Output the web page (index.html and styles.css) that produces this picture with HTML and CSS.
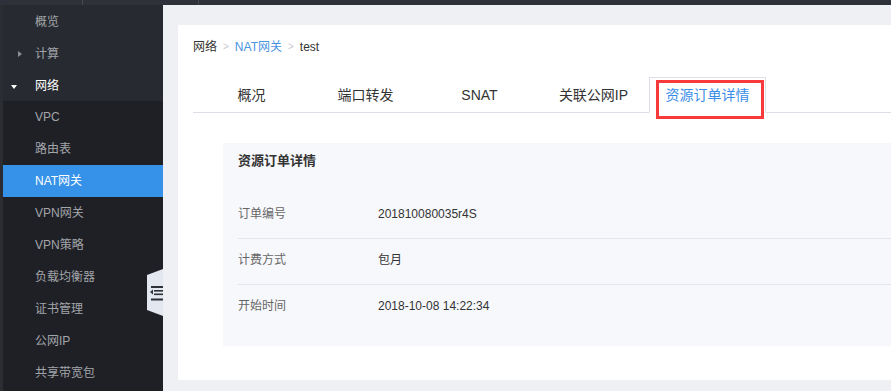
FILE: index.html
```html
<!DOCTYPE html>
<html lang="zh-CN">
<head>
<meta charset="utf-8">
<title>NAT网关 - 资源订单详情</title>
<link rel="stylesheet" href="styles.css">
</head>
<body>
<div class="topbar">
  <span class="topbar-sep sep-1"></span>
  <span class="topbar-sep sep-2"></span>
</div>
<div class="app">
  <aside class="sidebar">
    <div class="menu-top">
      <div class="menu-item">概览</div>
      <div class="menu-item"><span class="arrow-right"></span>计算</div>
      <div class="menu-item menu-open"><span class="arrow-down"></span>网络</div>
    </div>
    <div class="submenu">
      <div class="menu-item">VPC</div>
      <div class="menu-item">路由表</div>
      <div class="menu-item menu-active">NAT网关</div>
      <div class="menu-item">VPN网关</div>
      <div class="menu-item">VPN策略</div>
      <div class="menu-item">负载均衡器</div>
      <div class="menu-item">证书管理</div>
      <div class="menu-item">公网IP</div>
      <div class="menu-item">共享带宽包</div>
    </div>
    <div class="collapse-handle">
      <svg width="13" height="16" viewBox="0 0 13 16">
        <rect x="1" y="0" width="12" height="2" fill="#2c3038"/>
        <polygon points="0,6 3,3.5 3,8.5" fill="#2c3038"/>
        <rect x="4" y="4" width="9" height="1.6" fill="#2c3038"/>
        <rect x="4" y="7.5" width="9" height="1.6" fill="#2c3038"/>
        <rect x="1" y="12.5" width="12" height="2" fill="#2c3038"/>
      </svg>
    </div>
  </aside>
  <main class="main">
    <section class="card">
      <nav class="breadcrumb">
        <span class="crumb">网络</span>
        <span class="crumb-sep">&gt;</span>
        <span class="crumb crumb-link">NAT网关</span>
        <span class="crumb-sep">&gt;</span>
        <span class="crumb">test</span>
      </nav>
      <div class="tabs">
        <div class="tab">概况</div>
        <div class="tab">端口转发</div>
        <div class="tab">SNAT</div>
        <div class="tab">关联公网IP</div>
        <div class="tab tab-active">资源订单详情<span class="highlight-box"></span></div>
      </div>
      <div class="detail-panel">
        <h3 class="detail-title">资源订单详情</h3>
        <div class="detail-row">
          <span class="detail-label">订单编号</span>
          <span class="detail-value">201810080035r4S</span>
        </div>
        <div class="detail-row">
          <span class="detail-label">计费方式</span>
          <span class="detail-value">包月</span>
        </div>
        <div class="detail-row detail-row-last">
          <span class="detail-label">开始时间</span>
          <span class="detail-value">2018-10-08 14:22:34</span>
        </div>
      </div>
    </section>
  </main>
</div>
</body>
</html>
```
FILE: styles.css
```css
* { box-sizing: border-box; }
html, body {
  margin: 0;
  padding: 0;
  width: 891px;
  height: 391px;
  overflow: hidden;
  background: #eff0f4;
  font-family: "Liberation Sans", "Noto Sans CJK SC", sans-serif;
}

.topbar {
  height: 5px;
  background: #2e3139;
  position: relative;
}
.topbar-sep {
  position: absolute;
  top: 0;
  width: 1px;
  height: 5px;
  background: #454851;
}
.sep-1 { left: 82px; }
.sep-2 { left: 198px; }

.app {
  display: flex;
  height: 386px;
}

.sidebar {
  width: 163px;
  flex: none;
  background: #1f2026;
  border-left: 3px solid #2b2d33;
  position: relative;
}
.menu-top { background: #272a30; }
.menu-item {
  height: 32px;
  line-height: 32px;
  padding-left: 32px;
  font-size: 12px;
  color: #a2a5aa;
  position: relative;
  white-space: nowrap;
}
.menu-top .menu-item {
  line-height: 29px;
  padding-top: 3px;
}
.menu-open { color: #ffffff; }
.menu-active {
  background: #3592e8;
  color: #ffffff;
}
.arrow-right {
  position: absolute;
  left: 15px;
  top: 14px;
  width: 0;
  height: 0;
  border-top: 3.5px solid transparent;
  border-bottom: 3.5px solid transparent;
  border-left: 4px solid #8a8e95;
}
.arrow-down {
  position: absolute;
  left: 8px;
  top: 16px;
  width: 0;
  height: 0;
  border-left: 3.5px solid transparent;
  border-right: 3.5px solid transparent;
  border-top: 4px solid #ffffff;
}

.collapse-handle {
  position: absolute;
  left: 144px;
  top: 264px;
  width: 16px;
  height: 47px;
  background: #e3e7ef;
  clip-path: polygon(0 6px, 100% 0, 100% 100%, 0 calc(100% - 6px));
  padding: 17px 0 0 3px;
}
.collapse-handle svg { display: block; }

.main {
  flex: 1;
  overflow: hidden;
  padding: 20px 0 0 15px;
}

.card {
  background: #ffffff;
  margin-right: -60px;
  height: 355px;
  padding: 15px 0 35px 15px;
}

.breadcrumb {
  font-size: 12px;
  line-height: 14px;
  height: 14px;
  color: #333333;
  display: flex;
  align-items: center;
}
.crumb-link { color: #4a93df; }
.crumb-sep {
  color: #c6c9cf;
  font-size: 10px;
  margin: 0 6px;
}

.tabs {
  margin-top: 23px;
  display: flex;
  border-bottom: 1px solid #dcdfe6;
  height: 36px;
}
.tab {
  width: 117px;
  flex: none;
  height: 35px;
  line-height: 37px;
  font-size: 14px;
  color: #333333;
  text-align: center;
  position: relative;
}
.tab + .tab { margin-left: -3px; }
.tab-active {
  color: #3a8ee8;
  border: 1px solid #dcdfe6;
  border-bottom: 1px solid #ffffff;
  height: 36px;
  line-height: 35px;
  margin-bottom: -1px;
  background: #ffffff;
}
.highlight-box {
  position: absolute;
  left: 6px;
  top: 2px;
  width: 108px;
  height: 39px;
  border: 3px solid #f83a3a;
}

.detail-panel {
  margin: 30px 0 0 30px;
  background: #f7f8fc;
  padding: 8px 0 16px 15px;
}
.detail-title {
  margin: 0 0 22px 0;
  font-size: 13px;
  line-height: 20px;
  font-weight: bold;
  color: #333333;
}
.detail-row {
  display: flex;
  height: 46px;
  padding-top: 11px;
  line-height: 20px;
  font-size: 12px;
  border-bottom: 1px solid #e3e5ec;
}
.detail-row-last {
  border-bottom: none;
  height: 45px;
}
.detail-label {
  width: 140px;
  color: #666666;
}
.detail-value { color: #333333; }
```
